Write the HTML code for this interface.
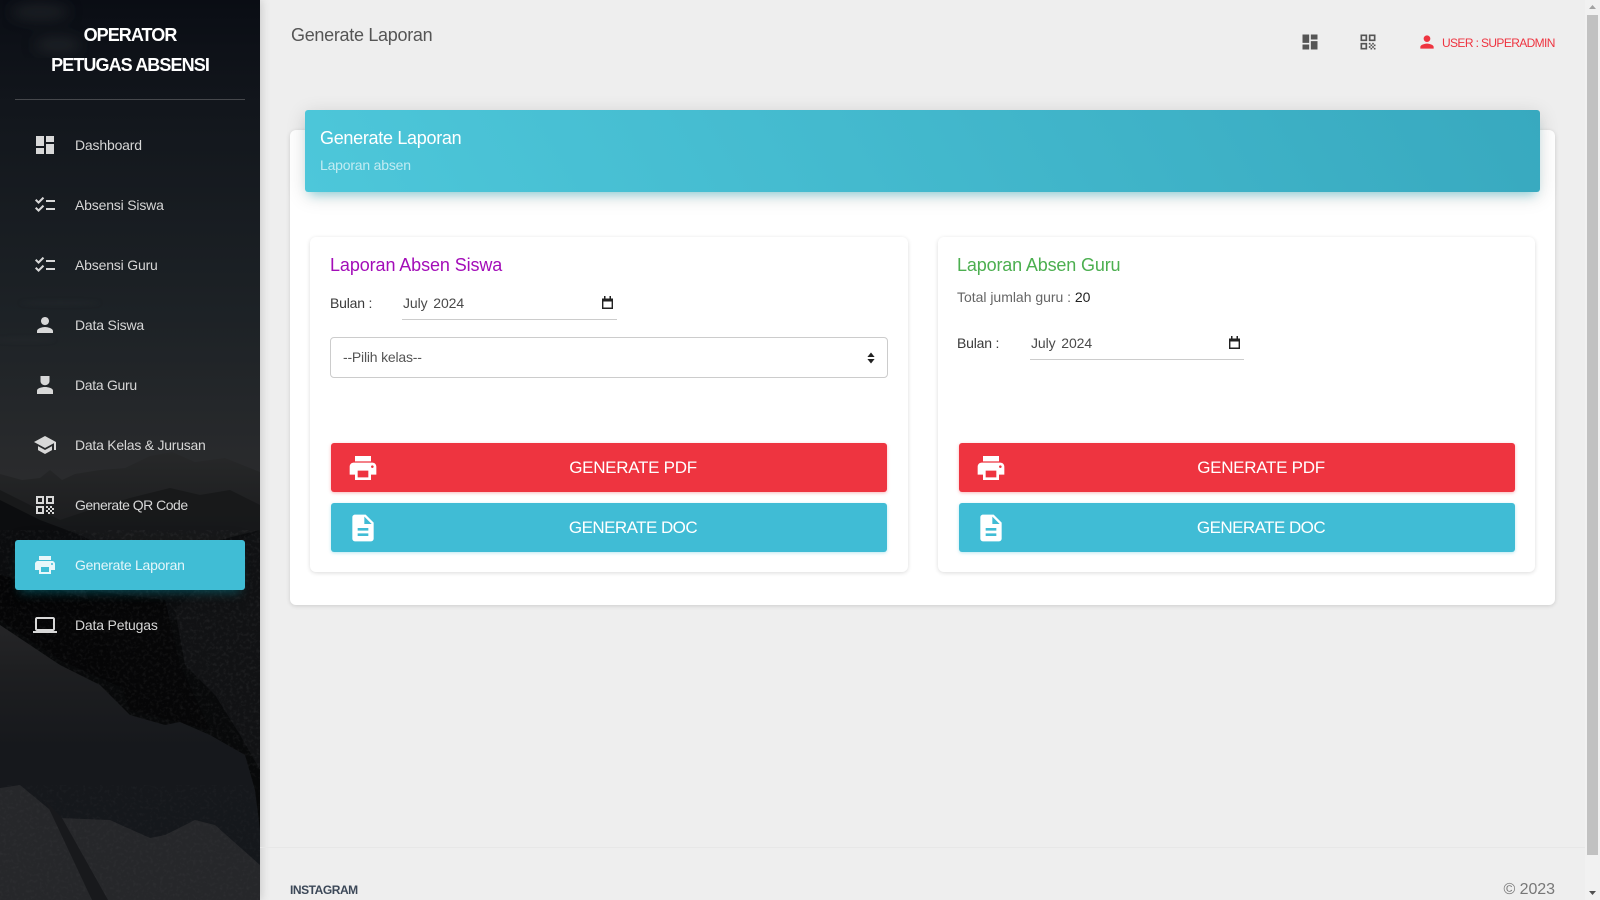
<!DOCTYPE html>
<html lang="id"><head><meta charset="utf-8"><title>Generate Laporan</title>
<style>
html,body{margin:0;padding:0;width:1600px;height:900px;overflow:hidden;background:#eee;font-family:"Liberation Sans",sans-serif}
.a{position:absolute;white-space:nowrap;line-height:20px}
svg{position:absolute;display:block}
#side{position:absolute;left:0;top:0;width:260px;height:900px;overflow:hidden;background:#111;box-shadow:0 0 10px rgba(0,0,0,.2)}
.m{left:75px;font-size:14px;color:#d6d6d6;letter-spacing:-.18px;height:20px}
.card{position:absolute;background:#fff;border-radius:6px;box-shadow:0 1px 4px rgba(0,0,0,.14)}
.btn{position:absolute;height:49px;border-radius:3px;color:#fff;font-size:17px;line-height:50px;text-align:center}
.r{background:#ee3440;box-shadow:0 1px 3px rgba(238,52,64,.35)}
.t{background:#40bcd5;box-shadow:0 1px 3px rgba(64,188,213,.35)}
.btn span{position:absolute;left:0;width:604px;letter-spacing:-.28px}
.t span{letter-spacing:-.55px}
.lab{font-size:14px;color:#3a3a3a;letter-spacing:-.2px}
.dt{font-size:14px;color:#4a4a4a;letter-spacing:-.1px;word-spacing:2px}
</style></head><body>
<svg width="0" height="0" style="position:absolute"><defs>
<path id="i-dash" d="M3 13h8V3H3v10zm0 8h8v-6H3v6zm10 0h8V11h-8v10zm0-18v6h8V3h-8z"/>
<path id="i-check" d="M22 7h-9v2h9V7zm0 8h-9v2h9v-2zM5.54 11 2 7.46l1.41-1.41 2.12 2.12 4.24-4.24 1.41 1.41L5.54 11zm0 8L2 15.46l1.41-1.41 2.12 2.12 4.24-4.24 1.41 1.41L5.54 19z"/>
<path id="i-person" d="M12 12c2.21 0 4-1.79 4-4s-1.79-4-4-4-4 1.79-4 4 1.79 4 4 4zm0 2c-2.67 0-8 1.34-8 4v2h16v-2c0-2.66-5.33-4-8-4z"/>
<path id="i-guru" d="M7.5 3h9v5c0 2.5-2 4.2-4.5 4.2S7.5 10.5 7.5 8V3zM12 14c-3 0-8 1.2-8 3.6V21h16v-3.4C20 15.2 15 14 12 14z"/>
<path id="i-school" d="M5 13.18v4L12 21l7-3.82v-4L12 17l-7-3.82zM12 3 1 9l11 6 9-4.91V17h2V9L12 3z"/>
<path id="i-qr" d="M3 11h8V3H3v8zm2-6h4v4H5V5zM3 21h8v-8H3v8zm2-6h4v4H5v-4zM13 3v8h8V3h-8zm6 6h-4V5h4v4zM19 19h2v2h-2zM13 13h2v2h-2zM15 15h2v2h-2zM13 17h2v2h-2zM15 19h2v2h-2zM17 17h2v2h-2zM17 13h2v2h-2zM19 15h2v2h-2z"/>
<path id="i-print" d="M19 8H5c-1.66 0-3 1.34-3 3v6h4v4h12v-4h4v-6c0-1.66-1.34-3-3-3zm-3 11H8v-5h8v5zm3-7c-.55 0-1-.45-1-1s.45-1 1-1 1 .45 1 1-.45 1-1 1zm-1-9H6v4h12V3z"/>
<path id="i-laptop" d="M20 18c1.1 0 1.99-.9 1.99-2L22 6c0-1.1-.9-2-2-2H4c-1.1 0-2 .9-2 2v10c0 1.1.9 2 2 2H0v2h24v-2h-4zM4 6h16v10H4V6z"/>
<path id="i-doc" d="M14 2H6c-1.1 0-1.99.9-1.99 2L4 20c0 1.1.89 2 1.99 2H18c1.1 0 2-.9 2-2V8l-6-6zm2 16H8v-2h8v2zm0-4H8v-2h8v2zm-3-5V3.5L18.5 9H13z"/>
<path id="i-cal" d="M1 2.5h2V0h1.5v2.5h4V0H10v2.5h2V13H1V2.5zm1.4 3v6h8.2v-6H2.4z"/>
</defs></svg>

<div id="side">
<svg width="260" height="900" viewBox="0 0 260 900" style="left:0;top:0">
<defs>
<linearGradient id="sky" x1="0" y1="0" x2="0" y2="1"><stop offset="0" stop-color="#0a0d14"/><stop offset=".2" stop-color="#12161c"/><stop offset=".6" stop-color="#1d2226"/><stop offset=".9" stop-color="#2a2b2d"/><stop offset="1" stop-color="#2e2e2f"/></linearGradient>
<linearGradient id="ridge" x1="0" y1="0" x2="0" y2="1"><stop offset="0" stop-color="#272829"/><stop offset="1" stop-color="#17181a"/></linearGradient>
<linearGradient id="snow" x1="0" y1="0" x2="0" y2="1"><stop offset="0" stop-color="#252527"/><stop offset=".18" stop-color="#1d1e20"/><stop offset=".45" stop-color="#16181c"/><stop offset="1" stop-color="#14171b"/></linearGradient>
<filter id="grain" x="0" y="0" width="100%" height="100%"><feTurbulence type="fractalNoise" baseFrequency=".3" numOctaves="3" seed="5"/><feColorMatrix values="0 0 0 0 1 0 0 0 0 1 0 0 0 0 1 1.8 0 0 0 -.85"/></filter>
<filter id="blur"><feGaussianBlur stdDeviation="7"/></filter>
<filter id="b2"><feGaussianBlur stdDeviation="2"/></filter>
</defs>
<rect width="260" height="530" fill="url(#sky)"/>
<rect y="500" width="260" height="400" fill="#08090a"/>
<g filter="url(#blur)" fill="#2c2e30" opacity=".55"><ellipse cx="40" cy="12" rx="30" ry="8"/><ellipse cx="58" cy="45" rx="24" ry="8"/></g>
<g filter="url(#b2)" fill="#2c2e30" opacity=".35"><ellipse cx="60" cy="303" rx="40" ry="2"/><ellipse cx="25" cy="340" rx="30" ry="2"/></g>
<polygon points="0,474 22,480 40,478 50,470 62,480 75,474 100,470 125,468 150,456 172,452 195,462 225,458 260,472 260,560 0,520" fill="url(#ridge)"/>
<polygon points="0,490 30,505 60,520 90,510 130,498 170,488 200,495 230,490 260,505 260,620 0,620" fill="#17181a" opacity=".9"/>
<polygon points="0,500 40,520 80,535 110,550 150,560 200,545 260,530 260,620 0,620" fill="#0c0d0f"/>
<polygon points="175,610 205,580 240,540 260,530 260,770 240,735 215,695 185,665" fill="#111214"/>
<polygon points="0,575 60,590 90,600 130,640 150,700 60,660 0,620" fill="#050506"/>
<polygon points="85,590 165,600 180,665 210,730 130,710" fill="#060607"/>
<rect y="530" width="260" height="250" filter="url(#grain)" opacity=".08"/>
<polygon points="0,625 30,645 60,665 100,685 130,715 165,725 180,722 210,735 245,755 255,790 260,830 260,900 0,900" fill="url(#snow)"/>
<polygon points="0,788 20,785 60,818 110,820 150,838 165,835 195,820 215,825 260,865 260,900 0,900" fill="#26272a"/>
<rect y="785" width="260" height="115" filter="url(#grain)" opacity=".04"/>
<polygon points="45,800 62,818 108,900 92,900" fill="#18191c"/>
</svg>

<div class="a" style="left:0;width:260px;text-align:center;top:25px;font-size:18px;font-weight:bold;color:#fff;letter-spacing:-.95px">OPERATOR</div>
<div class="a" style="left:0;width:260px;text-align:center;top:55px;font-size:18px;font-weight:bold;color:#fff;letter-spacing:-.9px">PETUGAS ABSENSI</div>
<div style="position:absolute;left:15px;top:99px;width:230px;height:1px;background:rgba(180,180,180,.32)"></div>

<div style="position:absolute;left:15px;top:540px;width:230px;height:50px;border-radius:3px;background:#40bdd5;box-shadow:0 4px 20px rgba(0,0,0,.14),0 7px 10px -5px rgba(0,188,212,.4)"></div>

<svg style="left:33px;top:133px" width="24" height="24" fill="#d8d8d8"><use href="#i-dash"/></svg>
<svg style="left:33px;top:193px" width="24" height="24" fill="#d8d8d8"><use href="#i-check"/></svg>
<svg style="left:33px;top:253px" width="24" height="24" fill="#d8d8d8"><use href="#i-check"/></svg>
<svg style="left:33px;top:313px" width="24" height="24" fill="#d8d8d8"><use href="#i-person"/></svg>
<svg style="left:33px;top:373px" width="24" height="24" fill="#d8d8d8"><use href="#i-guru"/></svg>
<svg style="left:33px;top:433px" width="24" height="24" fill="#d8d8d8"><use href="#i-school"/></svg>
<svg style="left:33px;top:493px" width="24" height="24" fill="#d8d8d8"><use href="#i-qr"/></svg>
<svg style="left:33px;top:553px" width="24" height="24" fill="#e8f7fa"><use href="#i-print"/></svg>
<svg style="left:33px;top:613px" width="24" height="24" fill="#d8d8d8"><use href="#i-laptop"/></svg>

<div class="a m" style="top:135px">Dashboard</div>
<div class="a m" style="top:195px">Absensi Siswa</div>
<div class="a m" style="top:255px">Absensi Guru</div>
<div class="a m" style="top:315px">Data Siswa</div>
<div class="a m" style="top:375px;letter-spacing:-.3px">Data Guru</div>
<div class="a m" style="top:435px;letter-spacing:-.24px">Data Kelas &amp; Jurusan</div>
<div class="a m" style="top:495px;letter-spacing:-.5px">Generate QR Code</div>
<div class="a m" style="top:555px;color:#e4f6fa;letter-spacing:-.25px">Generate Laporan</div>
<div class="a m" style="top:615px">Data Petugas</div>
</div>

<div class="a" style="left:291px;top:25px;font-size:18px;color:#555;letter-spacing:-.3px">Generate Laporan</div>
<svg style="left:1300px;top:32px" width="20" height="20" viewBox="0 0 24 24" fill="#555"><use href="#i-dash"/></svg>
<svg style="left:1358px;top:32px" width="20" height="20" viewBox="0 0 24 24" fill="#555"><use href="#i-qr"/></svg>
<svg style="left:1417px;top:32px" width="20" height="20" viewBox="0 0 24 24" fill="#ee3440"><use href="#i-person"/></svg>
<div class="a" style="left:1442px;top:33px;font-size:12px;color:#ee3440;letter-spacing:-.62px">USER : SUPERADMIN</div>

<div class="card" style="left:290px;top:130px;width:1265px;height:475px;box-shadow:0 1px 4px rgba(0,0,0,.14)"></div>
<div style="position:absolute;left:305px;top:110px;width:1235px;height:82px;border-radius:3px;background:linear-gradient(60deg,#4dc7da,#38a9bf);box-shadow:0 4px 20px rgba(0,0,0,.14),0 7px 10px -5px rgba(0,188,212,.4)"></div>
<div class="a" style="left:320px;top:128px;font-size:18px;color:#fff;letter-spacing:-.3px">Generate Laporan</div>
<div class="a" style="left:320px;top:155px;font-size:14px;color:rgba(255,255,255,.66);letter-spacing:-.2px">Laporan absen</div>

<div class="card" style="left:310px;top:237px;width:598px;height:335px"></div>
<div class="card" style="left:938px;top:237px;width:597px;height:335px"></div>

<div class="a" style="left:330px;top:255px;font-size:18px;color:#a30db8;letter-spacing:-.1px">Laporan Absen Siswa</div>
<div class="a lab" style="left:330px;top:293px">Bulan :</div>
<div class="a dt" style="left:403px;top:293px">July 2024</div>
<svg style="left:601px;top:296px" width="13" height="13" fill="#222"><use href="#i-cal"/></svg>
<div style="position:absolute;left:402px;top:319px;width:215px;height:1px;background:#ccc"></div>
<div style="position:absolute;left:330px;top:337px;width:556px;height:39px;border:1px solid #ccc;border-radius:4px;background:#fff"></div>
<div class="a" style="left:343px;top:347px;font-size:14px;color:#555;letter-spacing:-.2px">--Pilih kelas--</div>
<svg style="left:866px;top:352px" width="10" height="12" fill="#222"><path d="M5 0.5 8.6 5H1.4zM5 11.5 1.4 7h7.2z"/></svg>

<div class="btn r" style="left:331px;top:443px;width:556px"><span>GENERATE PDF</span></div>
<div class="btn t" style="left:331px;top:503px;width:556px"><span>GENERATE DOC</span></div>
<svg style="left:347px;top:452px" width="32" height="32" viewBox="0 0 24 24" fill="#fff"><use href="#i-print"/></svg>
<svg style="left:347px;top:512px" width="32" height="32" viewBox="0 0 24 24" fill="#fff"><use href="#i-doc"/></svg>

<div class="a" style="left:957px;top:255px;font-size:18px;color:#4caf50;letter-spacing:-.15px">Laporan Absen Guru</div>
<div class="a" style="left:957px;top:287px;font-size:14px;color:#666;letter-spacing:-.02px">Total jumlah guru : <span style="color:#222">20</span></div>
<div class="a lab" style="left:957px;top:333px">Bulan :</div>
<div class="a dt" style="left:1031px;top:333px">July 2024</div>
<svg style="left:1228px;top:336px" width="13" height="13" fill="#222"><use href="#i-cal"/></svg>
<div style="position:absolute;left:1030px;top:359px;width:214px;height:1px;background:#ccc"></div>

<div class="btn r" style="left:959px;top:443px;width:556px"><span>GENERATE PDF</span></div>
<div class="btn t" style="left:959px;top:503px;width:556px"><span>GENERATE DOC</span></div>
<svg style="left:975px;top:452px" width="32" height="32" viewBox="0 0 24 24" fill="#fff"><use href="#i-print"/></svg>
<svg style="left:975px;top:512px" width="32" height="32" viewBox="0 0 24 24" fill="#fff"><use href="#i-doc"/></svg>

<div style="position:absolute;left:260px;top:847px;width:1325px;height:1px;background:#e7e7e7"></div>
<div class="a" style="left:290px;top:880px;font-size:12px;font-weight:bold;color:#3c4858;letter-spacing:-.45px">INSTAGRAM</div>
<div class="a" style="right:45px;top:880px;font-size:16px;color:#777;letter-spacing:-.05px">© 2023</div>

<div style="position:absolute;left:1585px;top:0;width:15px;height:900px;background:#f1f1f1"></div>
<div style="position:absolute;left:1587px;top:15px;width:11px;height:840px;background:#c1c1c1"></div>
<svg style="left:1585px;top:0" width="15" height="15" fill="#a3a3a3"><path d="M7.5 5 11 9H4z"/></svg>
<svg style="left:1585px;top:885px" width="15" height="15" fill="#505050"><path d="M4 6h7l-3.5 4z"/></svg>
</body></html>
